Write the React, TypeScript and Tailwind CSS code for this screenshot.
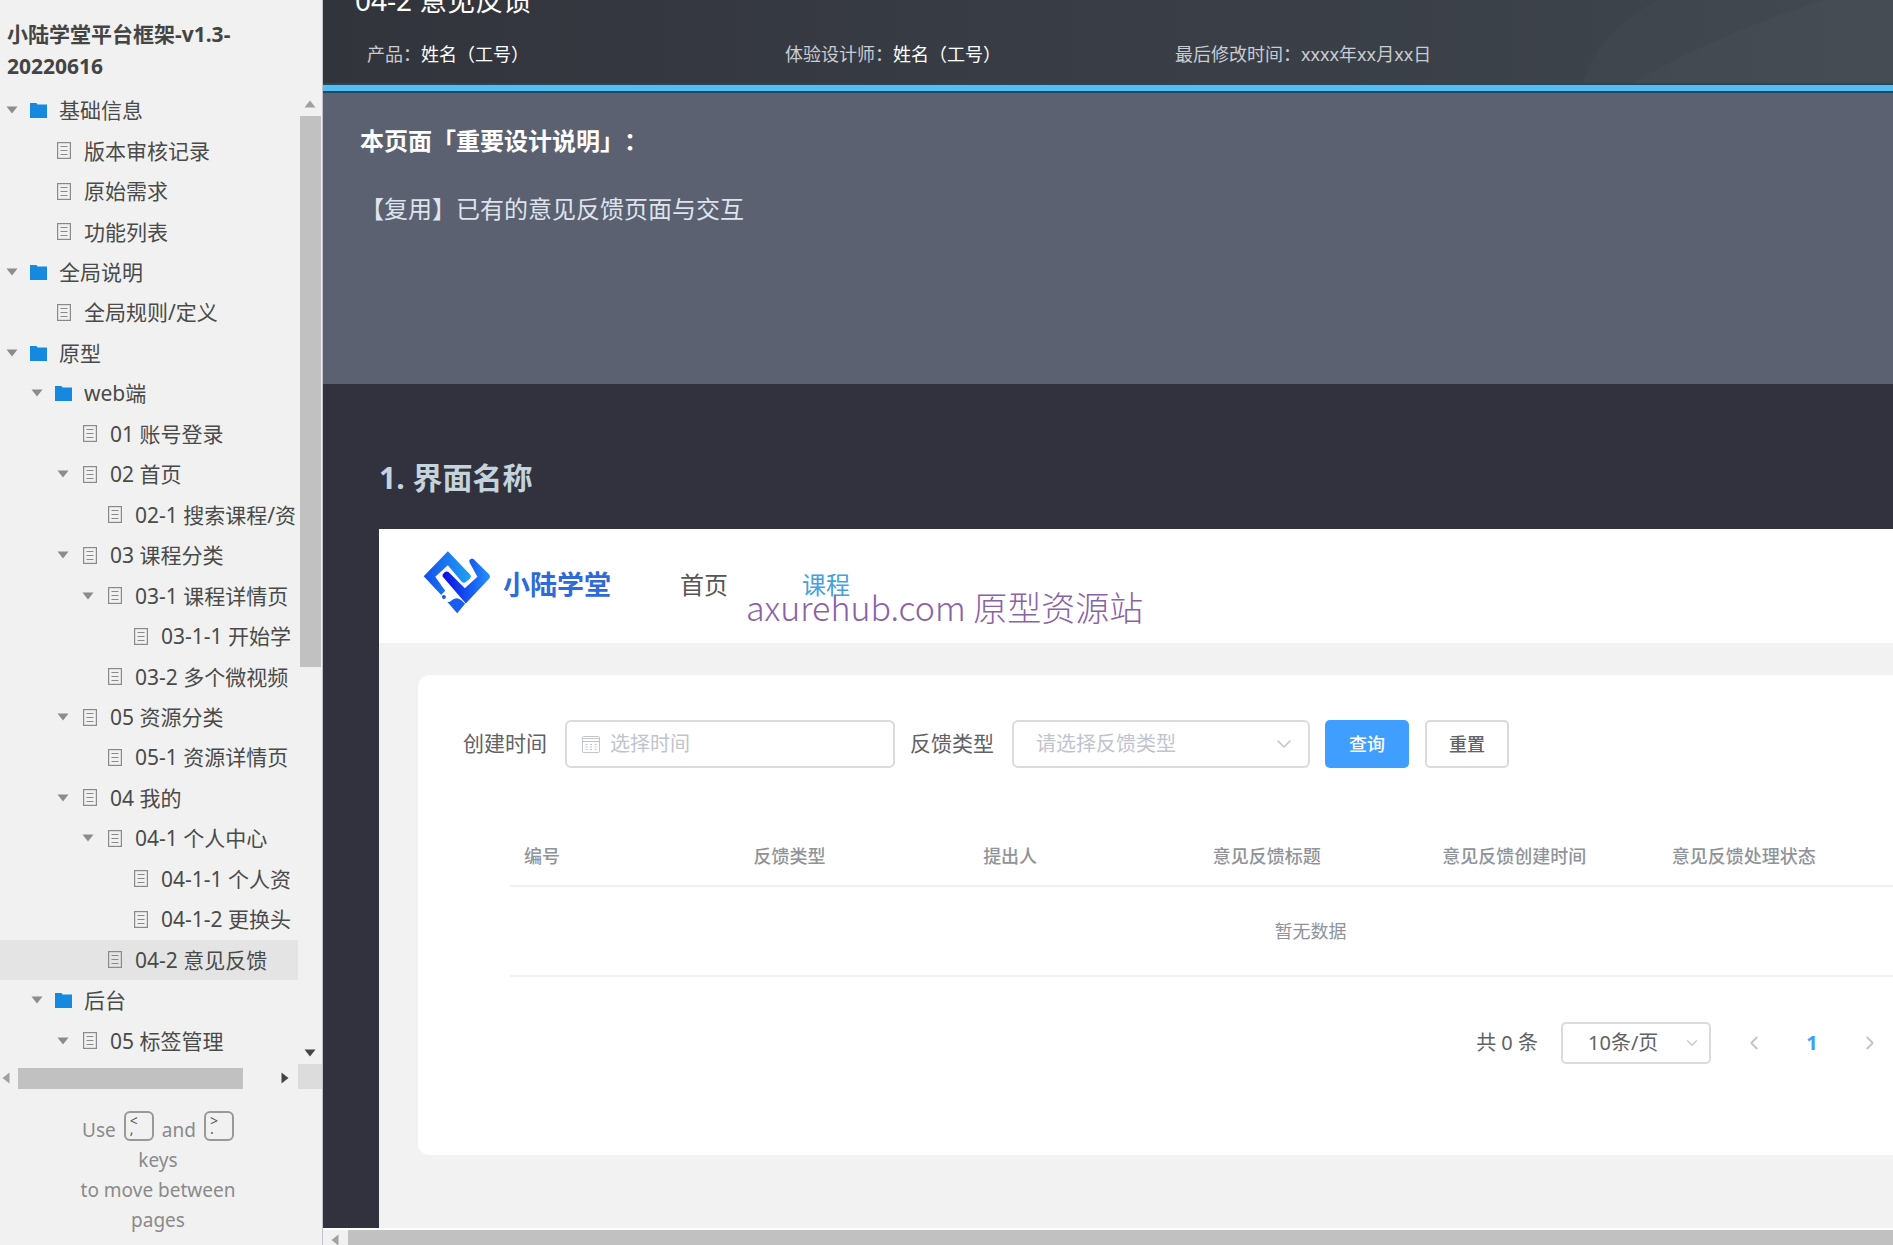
import { ChevronDown, ChevronLeft, ChevronRight } from "lucide-react";
import clsx from "clsx";

type Page = {
  title: string;
  level: number;
  folder?: boolean;
  open?: boolean;
  active?: boolean;
};

const pages: Page[] = [
  { title: "基础信息", level: 0, folder: true, open: true },
  { title: "版本审核记录", level: 1 },
  { title: "原始需求", level: 1 },
  { title: "功能列表", level: 1 },
  { title: "全局说明", level: 0, folder: true, open: true },
  { title: "全局规则/定义", level: 1 },
  { title: "原型", level: 0, folder: true, open: true },
  { title: "web端", level: 1, folder: true, open: true },
  { title: "01 账号登录", level: 2 },
  { title: "02 首页", level: 2, open: true },
  { title: "02-1 搜索课程/资", level: 3 },
  { title: "03 课程分类", level: 2, open: true },
  { title: "03-1 课程详情页", level: 3, open: true },
  { title: "03-1-1 开始学", level: 4 },
  { title: "03-2 多个微视频", level: 3 },
  { title: "05 资源分类", level: 2, open: true },
  { title: "05-1 资源详情页", level: 3 },
  { title: "04 我的", level: 2, open: true },
  { title: "04-1 个人中心", level: 3, open: true },
  { title: "04-1-1 个人资", level: 4 },
  { title: "04-1-2 更换头", level: 4 },
  { title: "04-2 意见反馈", level: 3, active: true },
  { title: "后台", level: 1, folder: true, open: true },
  { title: "05 标签管理", level: 2, open: true },
];

const indents = ["pl-[6px]", "pl-[31px]", "pl-[57px]", "pl-[82px]", "pl-[108px]"];

const columns = [
  "编号",
  "反馈类型",
  "提出人",
  "意见反馈标题",
  "意见反馈创建时间",
  "意见反馈处理状态",
];

function Triangle({ className }: { className?: string }) {
  return (
    <svg viewBox="0 0 12 8" className={clsx("h-2 w-3 shrink-0", className)} fill="currentColor">
      <path d="M0.500 0.5h11L6 7.500z" />
    </svg>
  );
}

function FolderIcon() {
  return (
    <svg viewBox="0 0 17 16" className="h-4 w-[17px]" fill="#1489df">
      <path d="M0 1h6.5l1 1.5H17V16H0z" />
    </svg>
  );
}

function PageIcon() {
  return (
    <svg viewBox="0 0 14 17" className="ml-[2px] h-[17px] w-[14px]" fill="none" stroke="#8a8a8a">
      <rect x="0.6" y="0.6" width="12.8" height="15.8" strokeWidth="1.2" />
      <path d="M3.500 4.500h7M3.500 8.500h7M3.500 12.500h7" />
    </svg>
  );
}

function CalendarIcon() {
  return (
    <svg viewBox="0 0 18 18" className="h-[18px] w-[18px] shrink-0" fill="none" stroke="#c0c4cc">
      <rect x="0.5" y="1.5" width="17" height="16" rx="1" />
      <path d="M1 3.500h16M1 6.500h16" />
      <path d="M3.500 9.500h2M8 9.500h2M12.500 9.500h2M3.500 12h2M8 12h2M12.500 12h2M3.500 14.500h2M8 14.500h2M12.500 14.500h2" />
    </svg>
  );
}

function Logo() {
  return (
    <svg viewBox="25 30 205 190" className="h-[63px] w-[68px] shrink-0" fill="none">
      <defs>
        <linearGradient id="logo-a" gradientUnits="userSpaceOnUse" x1="30" y1="110" x2="165" y2="110">
          <stop offset="0" stopColor="#1550ee" />
          <stop offset="1" stopColor="#1fa0f4" />
        </linearGradient>
        <linearGradient id="logo-b" gradientUnits="userSpaceOnUse" x1="85" y1="110" x2="228" y2="110">
          <stop offset="0" stopColor="#0c0ce6" />
          <stop offset="0.5" stopColor="#1450f0" />
          <stop offset="1" stopColor="#2593ff" />
        </linearGradient>
      </defs>
      <path
        fill="url(#logo-a)"
        d="M100 31 167 101Q172 108 166 114L153 124Q146 128 141 122L100 73 62 108 92 150 80 163 27 106Z"
      />
      <path
        fill="url(#logo-b)"
        d="M165 64Q163 55 171 53 177 52 181 58L224 100Q230 107 224 114L154 188 84 107Q82 101 88 96 97 88 105 96L151 142 189 108Z"
      />
      <circle cx="88" cy="169" r="6" fill="#1a55ee" />
      <path fill="#1a5cf0" d="M98 183Q104 186 110 180 124 166 140 178L152 189 128 218Z" />
    </svg>
  );
}

function KeyCap({ top, bottom }: { top: string; bottom: string }) {
  return (
    <kbd className="-mt-1 flex h-[30px] w-[30px] flex-col items-start rounded-md border-2 border-[#999] pt-1 pl-1 font-['Noto_Sans',sans-serif] text-sm leading-2 text-[#555]">
      <span>{top}</span>
      <span>{bottom}</span>
    </kbd>
  );
}

function Sidebar() {
  return (
    <aside className="flex w-[323px] shrink-0 flex-col border-r border-[#c3c3cb] bg-[#f1f1f1] text-[#4a4a4a]">
      <h1 className="px-[7px] pt-[18px] pb-2 text-[21px] leading-8 font-bold text-[#444]">
        小陆学堂平台框架-v1.3-
        <br />
        20220616
      </h1>

      <div className="flex min-h-0 flex-1">
        <nav className="flex min-w-0 flex-1 flex-col">
          {pages.map(({ title, level, folder, open, active }) => (
            <a
              key={title}
              href="#"
              className={clsx(
                "flex min-h-0 flex-1 items-center overflow-hidden text-[21px] leading-8 whitespace-nowrap",
                indents[level],
                active && "bg-[#e4e4e4]"
              )}
            >
              <span className="w-6 shrink-0">
                {open && <Triangle className="text-[#8c8c8c]" />}
              </span>
              <span className="flex w-[29px] shrink-0 items-center">
                {folder ? <FolderIcon /> : <PageIcon />}
              </span>
              {title}
            </a>
          ))}
        </nav>
        <div className="flex w-6 flex-col items-center">
          <Triangle className="mt-[10px] mb-2 rotate-180 text-[#a0a0a0]" />
          <div className="h-[551px] w-[21px] bg-[#c1c1c1]" />
          <Triangle className="mt-auto mb-1 text-[#444]" />
        </div>
      </div>

      <div className="flex h-[28px] items-end">
        <Triangle className="mb-[7px] rotate-90 text-[#a0a0a0]" />
        <div className="ml-[6px] h-[21px] w-[225px] bg-[#c1c1c1]" />
        <Triangle className="mr-[7px] mb-[7px] ml-auto -rotate-90 text-[#444]" />
        <div className="h-[25px] w-6 bg-[#dcdcdc]" />
      </div>

      <div className="pt-[26px] pr-[6px] pb-[10px] text-center text-[19px] leading-[30px] text-[#8a8a8a]">
        <div className="flex h-[30px] justify-center gap-2">
          <span>Use</span>
          <KeyCap top="<" bottom="," />
          <span>and</span>
          <KeyCap top=">" bottom="." />
        </div>
        <p>keys</p>
        <p>to move between</p>
        <p>pages</p>
      </div>
    </aside>
  );
}

function PageHeader() {
  return (
    <header className="relative overflow-hidden bg-linear-to-r from-[#32343c] to-[#3f464e]">
      <svg
        viewBox="0 0 320 83"
        className="absolute top-0 right-0 h-[83px] w-[320px]"
        fill="#ffffff"
        fillOpacity="0.02"
      >
        <path d="M10 83Q25 30 85 0H320V83z" />
        <path d="M60 83Q130 40 250 0H320V83z" />
      </svg>
      <h2 className="-mt-4 pl-8 text-[28px] leading-8 text-white">04-2 意见反馈</h2>
      <div className="mt-[25px] mb-4 flex pl-11 text-lg leading-[26px] text-[#c9ccd2]">
        <p className="w-[418px]">
          产品：<span className="text-white">姓名（工号）</span>
        </p>
        <p className="w-[390px]">
          体验设计师：<span className="text-white">姓名（工号）</span>
        </p>
        <p>最后修改时间：xxxx年xx月xx日</p>
      </div>
      <div className="h-[10px] border-y-2 border-[#1d4b66] bg-[#57bdef]" />
    </header>
  );
}

function FilterForm() {
  return (
    <form className="flex items-center text-[21px] text-[#606266]">
      <label htmlFor="created">创建时间</label>
      <div className="ml-[18px] flex h-12 w-[330px] items-center gap-[10px] rounded-md border-2 border-[#d9dbe0] px-[15px]">
        <CalendarIcon />
        <input
          id="created"
          type="text"
          placeholder="选择时间"
          className="min-w-0 flex-1 text-xl outline-none placeholder:text-[#c0c4cc]"
        />
      </div>
      <label htmlFor="kind" className="ml-[15px]">
        反馈类型
      </label>
      <div className="relative ml-[18px]">
        <select
          id="kind"
          className="h-12 w-[298px] appearance-none rounded-md border-2 border-[#d9dbe0] bg-white pl-[22px] text-xl text-[#c0c4cc]"
        >
          <option>请选择反馈类型</option>
        </select>
        <ChevronDown
          size={24}
          strokeWidth={1.5}
          className="pointer-events-none absolute top-3 right-[14px] text-[#c0c4cc]"
        />
      </div>
      <button
        type="button"
        className="ml-[15px] h-12 w-[84px] rounded-[5px] bg-[#409eff] text-lg font-medium text-white"
      >
        查询
      </button>
      <button
        type="button"
        className="ml-4 h-12 w-[84px] rounded-[5px] border-2 border-[#d9dbe0] text-lg font-medium"
      >
        重置
      </button>
    </form>
  );
}

function FeedbackTable() {
  return (
    <div className="mt-[58px] ml-[47px] overflow-hidden">
      <table className="w-[1607px] table-fixed text-lg text-[#909399]">
        <thead>
          <tr className="h-[60px] border-b-2 border-[#f0f1f4]">
            {columns.map((name) => (
              <th key={name} className="pl-[14px] text-left font-medium">
                {name}
              </th>
            ))}
            <td />
          </tr>
        </thead>
        <tbody>
          <tr className="h-[90px] border-b-2 border-[#f0f1f4]">
            <td colSpan={7} className="pr-[6px] text-center">
              暂无数据
            </td>
          </tr>
        </tbody>
      </table>
    </div>
  );
}

function Pagination() {
  return (
    <div className="mt-[45px] flex items-center justify-end pr-3 text-xl text-[#606266]">
      <span>共 0 条</span>
      <div className="relative mr-8 ml-[23px]">
        <select
          aria-label="10条/页"
          className="h-[42px] w-[150px] appearance-none rounded-[5px] border-2 border-[#d9dbe0] bg-white pl-[25px]"
        >
          <option>10条/页</option>
        </select>
        <ChevronDown
          size={18}
          strokeWidth={1.5}
          className="pointer-events-none absolute top-3 right-[10px] text-[#c0c4cc]"
        />
      </div>
      <div className="flex items-center gap-9">
        <button type="button" aria-label="‹" className="w-[22px] text-[#c0c4cc]">
          <ChevronLeft size={22} />
        </button>
        <button type="button" className="w-[22px] font-bold text-[#409eff]">
          1
        </button>
        <button type="button" aria-label="›" className="w-[22px] text-[#c0c4cc]">
          <ChevronRight size={22} />
        </button>
      </div>
    </div>
  );
}

function Prototype() {
  return (
    <div className="relative mt-[31px] flex flex-1 flex-col overflow-hidden bg-[#f2f2f2]">
      <div className="flex h-[114px] shrink-0 items-center bg-white pb-2 pl-11">
        <Logo />
        <span className="ml-3 pt-1.5 text-[27px] leading-10 font-bold text-[#2f6ad9]">小陆学堂</span>
        <nav className="ml-[69px] flex gap-[74px] pt-1.5 text-2xl">
          <a href="#" className="text-[#555]">
            首页
          </a>
          <a href="#" className="text-[#459fe0]">
            课程
          </a>
        </nav>
      </div>
      <div className="mt-8 ml-[39px] shrink-0 rounded-l-xl bg-white pt-[45px] pb-[91px] pl-[45px]">
        <FilterForm />
        <FeedbackTable />
        <Pagination />
      </div>
      {/* Watermark */}
      <div className="pointer-events-none absolute top-[58px] left-[367px] font-['Noto_Sans_CJK_SC',sans-serif] text-[34px] leading-10 font-light whitespace-nowrap text-[#8a62a8]">
        axurehub.com 原型资源站
      </div>
    </div>
  );
}

export default function App() {
  return (
    <div className="flex h-screen overflow-hidden bg-[#31323e] font-['Noto_Sans','Noto_Sans_CJK_SC',sans-serif] [text-spacing-trim:space-all]">
      <Sidebar />
      <main className="flex min-w-0 flex-1 flex-col">
        <PageHeader />
        <section className="min-h-[291px] bg-[#5b6170] pt-[30px] pl-[37px] text-2xl leading-9">
          <h3 className="font-bold text-white">本页面「重要设计说明」：</h3>
          <p className="mt-8 text-[#dfe3ee]">【复用】已有的意见反馈页面与交互</p>
        </section>
        <section className="flex min-h-0 flex-1 flex-col pt-[74px] pl-14">
          <h3 className="text-[30px] leading-10 font-bold text-[#c5d3dd]">1. 界面名称</h3>
          <Prototype />
        </section>
        <div className="flex h-[17px] shrink-0 items-center border-t-2 border-white bg-[#f1f1f1]">
          <Triangle className="mt-1 ml-[6px] rotate-90 text-[#a0a0a0]" />
          <div className="ml-[7px] h-full flex-1 bg-[#c1c1c1]" />
        </div>
      </main>
    </div>
  );
}
